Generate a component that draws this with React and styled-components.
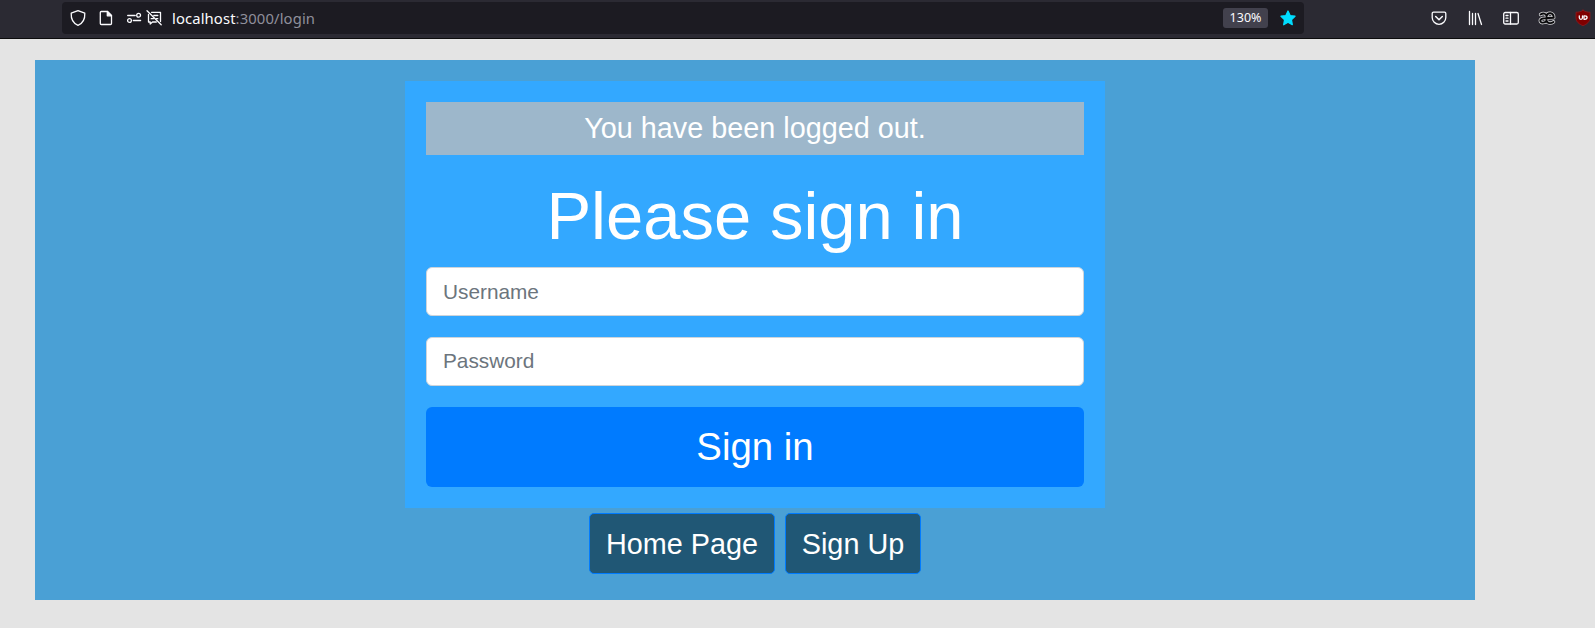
import React from 'react';
import styled, { createGlobalStyle } from 'styled-components';

const GlobalStyle = createGlobalStyle`
  *, *::before, *::after { box-sizing: border-box; }
  body {
    margin: 0;
    background: #e4e4e4;
    font-family: "Liberation Sans", Arial, sans-serif;
    overflow: hidden;
  }
`;

const Toolbar = styled.header`
  display: flex;
  align-items: flex-start;
  height: 39px;
  padding: 2px 4px 0 62px;
  background: #2b2a33;
  border-bottom: 1px solid #0c0c0d;
`;

const AddressBar = styled.div`
  display: flex;
  align-items: center;
  width: 1242px;
  height: 32px;
  padding: 0 8px;
  border-radius: 4px;
  background: #1c1b22;
`;

const Icon = styled.svg`
  display: block;
  flex: none;
  width: 16px;
  height: 16px;
  margin-left: ${({ $gap = 0 }) => $gap}px;
  overflow: visible;
  fill: none;
  stroke: #fbfbfe;
  stroke-width: 1.3;
  stroke-linecap: round;
  stroke-linejoin: round;
`;

const Url = styled.div`
  flex: 1;
  margin-left: 10px;
  color: #8f8f9b;
  font: 14.8px/20px "Noto Sans", sans-serif;
  letter-spacing: 0.12px;
`;

const Host = styled.span`
  color: #fbfbfe;
`;

const ZoomLevel = styled.div`
  width: 45px;
  height: 20px;
  border-radius: 3px;
  background: #42414d;
  color: #fbfbfe;
  font: 12.5px/20px "Noto Sans", sans-serif;
  text-align: center;
`;

const Extensions = styled.nav`
  display: flex;
  align-items: center;
  gap: 20px;
  height: 32px;
  margin-left: auto;
`;

const Page = styled.main`
  display: flex;
  flex-direction: column;
  align-items: center;
  width: 1440px;
  height: 540px;
  margin: 21px 0 0 35px;
  padding-top: 21px;
  background: #4aa0d5;
`;

const Card = styled.form`
  display: flex;
  flex-direction: column;
  width: 700px;
  height: 427px;
  padding: 21px;
  background: #33a8ff;
`;

const Notice = styled.p`
  height: 53px;
  margin: 0;
  background: #9db7cb;
  color: #fff;
  font-size: 28.8px;
  line-height: 53px;
  text-align: center;
`;

const Title = styled.h1`
  height: 81px;
  margin: 21px 0 10px;
  color: #fff;
  font-size: 67px;
  font-weight: 400;
  line-height: 79px;
  text-align: center;
`;

const Field = styled.input`
  width: 100%;
  height: 49px;
  margin: 0 0 21px;
  padding: 0 16px ${({ $lift = 0 }) => $lift}px;
  border: 1px solid #ced4da;
  border-radius: 6px;
  background: #fff;
  font: 20.8px "Liberation Sans", Arial, sans-serif;

  &::placeholder {
    color: #6c757d;
    opacity: 1;
  }
`;

const SubmitButton = styled.button`
  height: 80px;
  padding: 0;
  border: 0;
  border-radius: 6px;
  background: #007bff;
  color: #fff;
  font: 38.4px/80px "Liberation Sans", Arial, sans-serif;
`;

const Links = styled.div`
  display: flex;
  gap: 10px;
  margin-top: 5px;
`;

const LinkButton = styled.a`
  width: ${({ $width }) => $width}px;
  height: 61px;
  border: 1px solid #007bff;
  border-radius: 5px;
  background: #205775;
  color: #fff;
  font-size: 28.8px;
  line-height: 60px;
  text-align: center;
  white-space: nowrap;
`;

const ShieldIcon = () => (
  <Icon viewBox="0 0 16 16">
    <path d="M8 .7 14.800 3.200c.3 5.900-1.800 10-6.800 12.100C3 13.200.9 9.100 1.200 3.200Z" />
  </Icon>
);

const PageIcon = () => (
  <Icon viewBox="0 0 16 16" $gap={12}>
    <path d="M3.300 1.500h6.200l4 4v8a1 1 0 0 1-1 1h-9.200a1 1 0 0 1-1-1v-11a1 1 0 0 1 1-1Z" />
    <path d="M9.300 1.500v4.300h4.200Z" fill="#fbfbfe" />
  </Icon>
);

const PermissionsIcon = () => (
  <Icon viewBox="0 0 16 16" $gap={12}>
    <path d="M1.700 5.500h7.500M7.300 10.500h7.300" />
    <circle cx="12.600" cy="5.300" r="1.900" />
    <circle cx="3.500" cy="10.500" r="1.900" />
  </Icon>
);

const BlockedMessageIcon = () => (
  <Icon viewBox="0 0 16 16" $gap={4}>
    <path d="M5.500 2.300h9v9.200M2.500 4.500v7.500h1.700v2l2.300-2h3.800M7.800 5.500h4M5.200 8.700h2.300M10.200 8.700h1.600" />
    <path d="m1 .8 14.200 14" />
  </Icon>
);

const StarIcon = () => (
  <Icon viewBox="0 0 16 16" $gap={12}>
    <path
      d="m8 1 2.100 4.600 4.900.600-3.600 3.500.900 5L8 12.300l-4.300 2.400.900-5L1 6.200l4.900-.600Z"
      fill="#00ddff"
      stroke="#00ddff"
    />
  </Icon>
);

const PocketIcon = () => (
  <Icon viewBox="0 0 16 16">
    <path d="M2.500 2.200h11a1.300 1.300 0 0 1 1.300 1.300v4a6.800 6.800 0 0 1-13.600 0v-4a1.300 1.300 0 0 1 1.300-1.300Z" />
    <path d="m4.700 6.500 3.300 3.200 3.300-3.200" strokeWidth="1.500" />
  </Icon>
);

const LibraryIcon = () => (
  <Icon viewBox="0 0 16 16">
    <path d="M2.500 1.500v13M5.500 3.500v11M8.500 3.500v11M11 3.500l3.500 11" />
  </Icon>
);

const SidebarIcon = () => (
  <Icon viewBox="0 0 16 16">
    <rect x=".7" y="2.500" width="14.600" height="11.500" rx="1.500" />
    <path d="M7.500 2.500v11.500M3 5.500h2M3 8.200h2M3 11h2" />
  </Icon>
);

const ligaturePath =
  'M1.600 4.500c2.500-1.700 5.600-1 5.900 1.700v4.300c-.8 2.600-6.200 3-6.200.2 0-2.300 3-2.900 13.400-2.900 0-5.600-6.200-6-7.200-1.600v4.300c.7 3.200 4.700 3.200 7 1.400';

const LigatureIcon = () => (
  <Icon viewBox="0 0 16 16">
    <path d={ligaturePath} stroke="#d5d5d8" strokeWidth="3.500" />
    <path d={ligaturePath} stroke="#09090b" strokeWidth="1.900" />
  </Icon>
);

const BlockerIcon = () => (
  <Icon viewBox="0 0 16 16">
    <path
      d="M8 .2c2 1.500 4.300 2 7 2v5.500c0 4.200-3.200 6.500-7 8-3.800-1.500-7-3.800-7-8V2.200c2.700 0 5-.5 7-2Z"
      fill="#800000"
      stroke="#8c1a20"
      strokeWidth=".8"
    />
    <path d="M4.300 5.800v2c0 2 3.200 2 3.200 0v-2M9 5.800v3.500h.8c3 0 3-3.500 0-3.500Z" strokeWidth="1.300" />
  </Icon>
);

export default function App() {
  return (
    <>
      <GlobalStyle />
      <Toolbar>
        <AddressBar>
          <ShieldIcon />
          <PageIcon />
          <PermissionsIcon />
          <BlockedMessageIcon />
          <Url>
            <Host>localhost</Host>:3000/login
          </Url>
          <ZoomLevel>130%</ZoomLevel>
          <StarIcon />
        </AddressBar>
        <Extensions>
          <PocketIcon />
          <LibraryIcon />
          <SidebarIcon />
          <LigatureIcon />
          <BlockerIcon />
        </Extensions>
      </Toolbar>
      <Page>
        <Card>
          <Notice>You have been logged out.</Notice>
          <Title>Please sign in</Title>
          <Field type="text" placeholder="Username" />
          <Field type="password" placeholder="Password" $lift={2} />
          <SubmitButton type="button">Sign in</SubmitButton>
        </Card>
        <Links>
          <LinkButton $width={186}>Home Page</LinkButton>
          <LinkButton $width={136}>Sign Up</LinkButton>
        </Links>
      </Page>
    </>
  );
}
